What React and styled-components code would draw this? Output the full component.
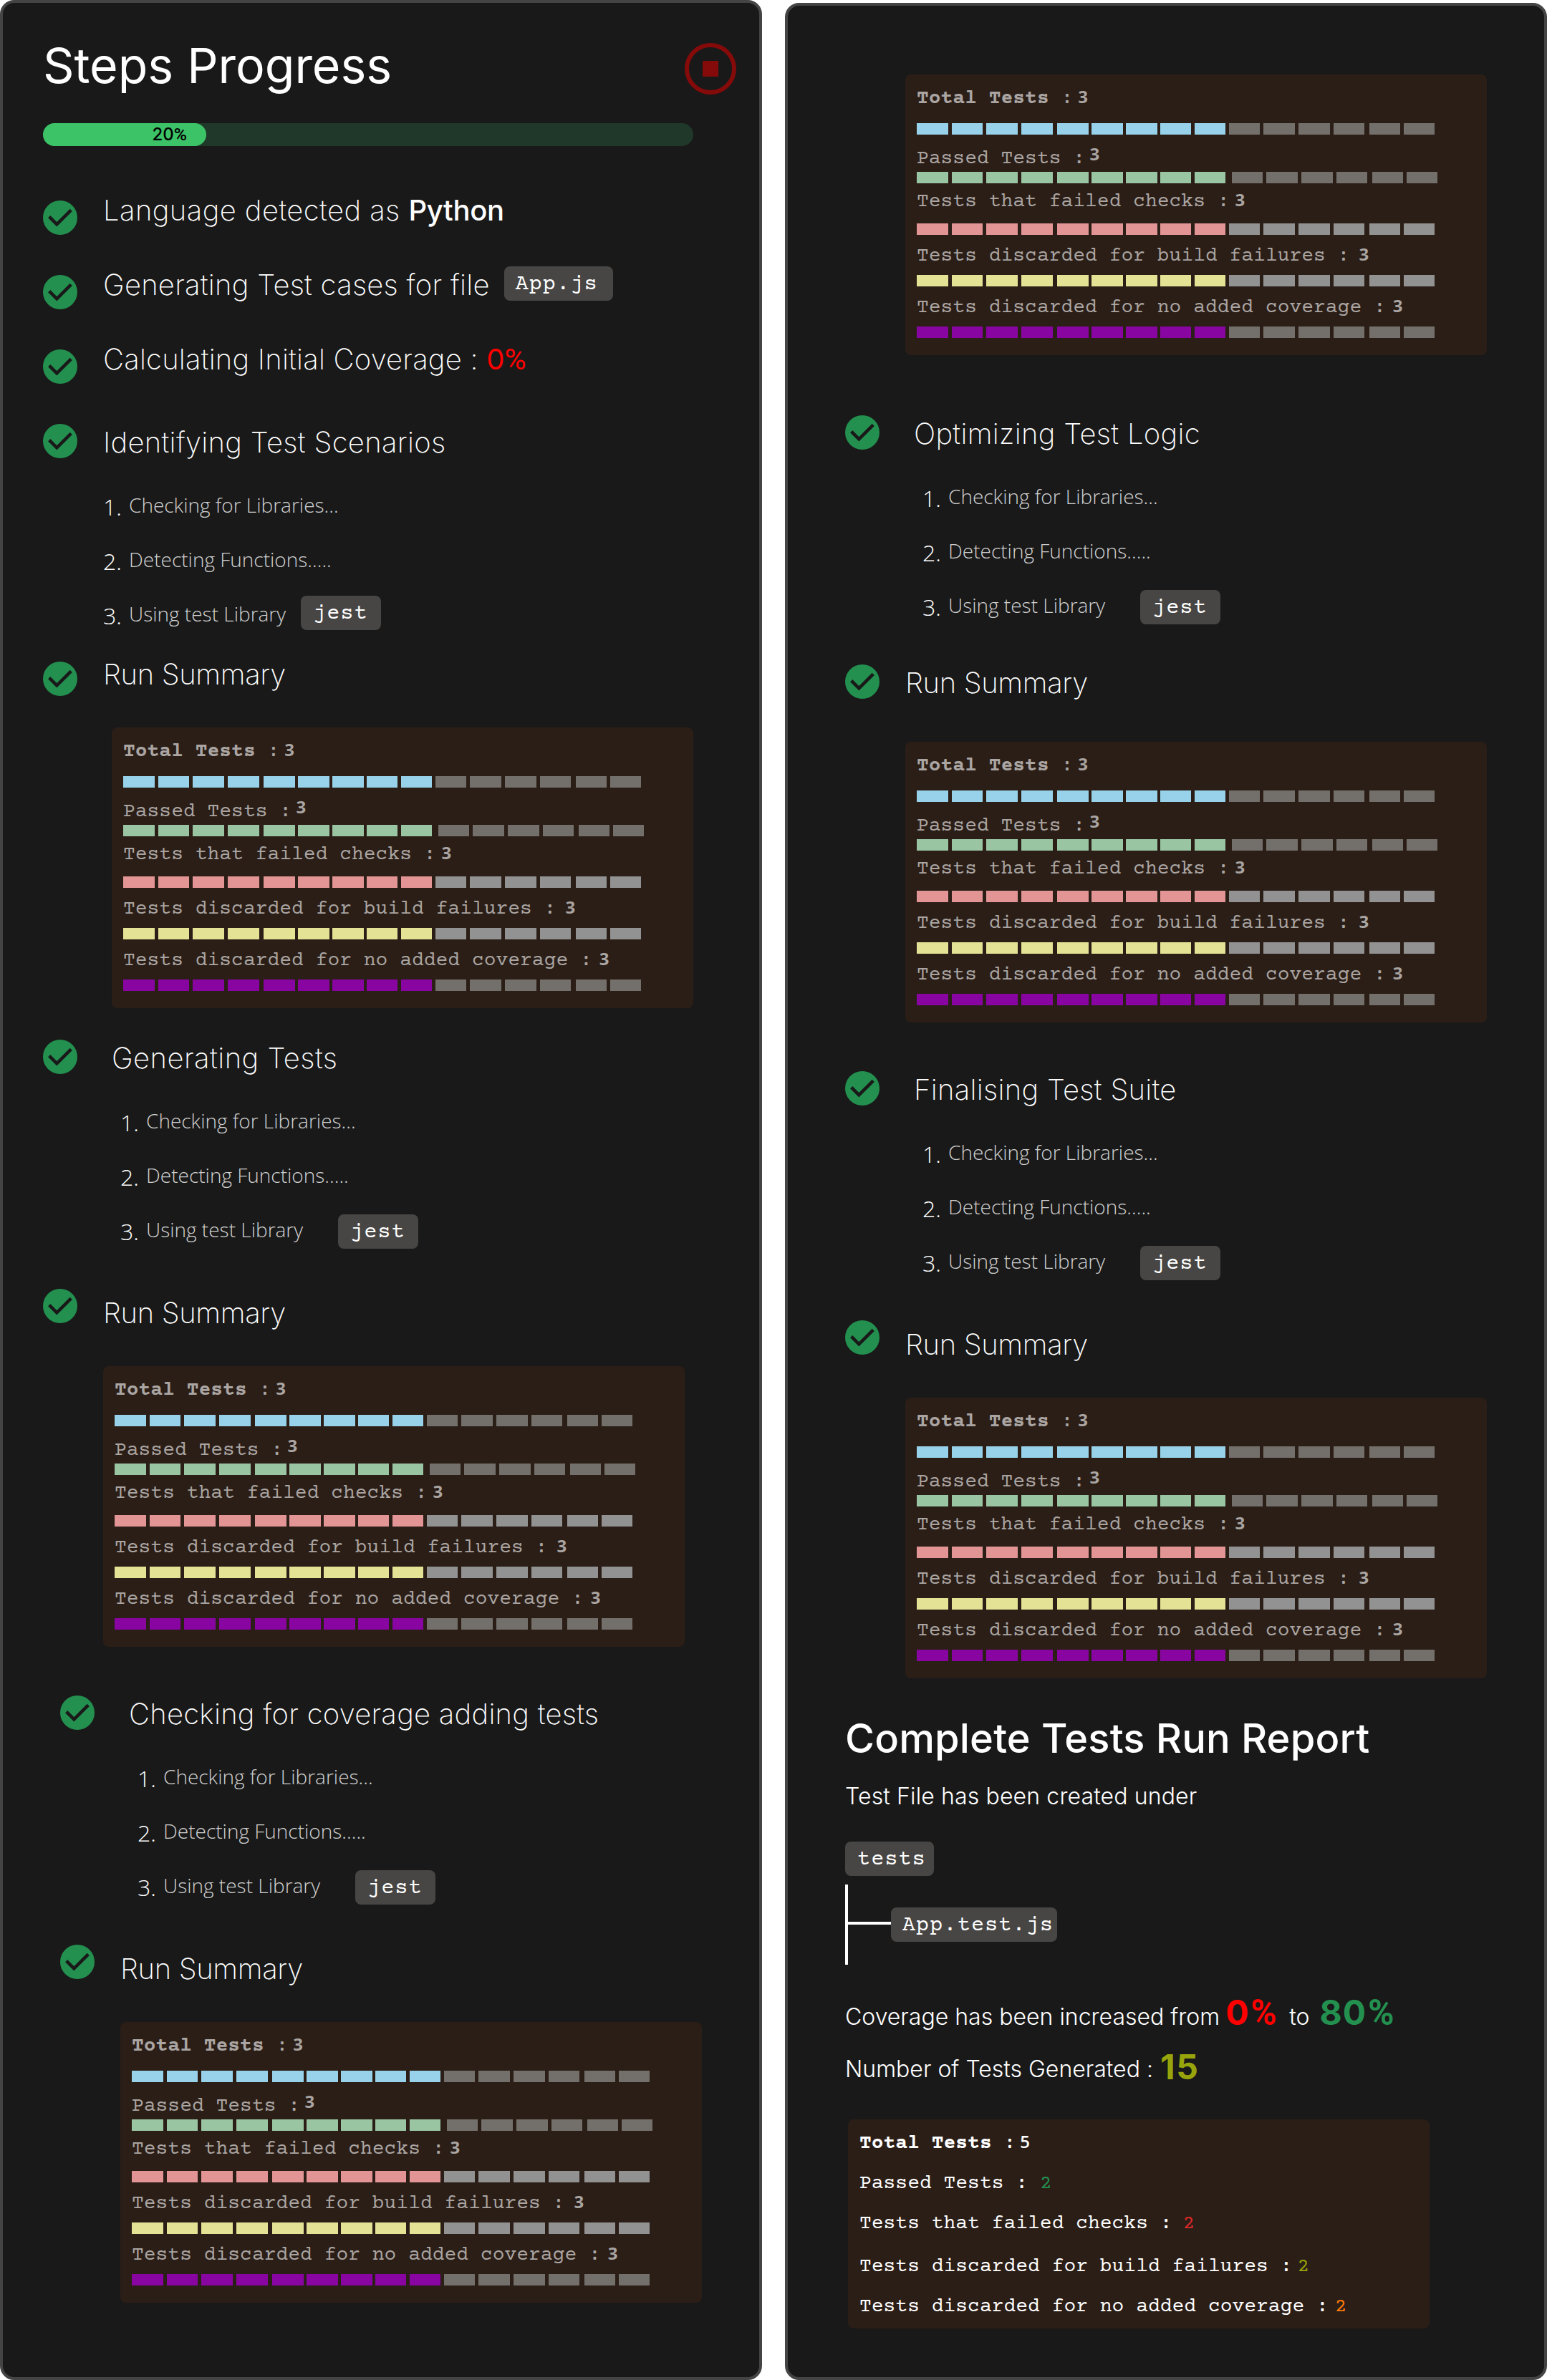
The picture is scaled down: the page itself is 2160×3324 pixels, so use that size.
import React from "react";
import styled, { createGlobalStyle } from "styled-components";

const GlobalStyle = createGlobalStyle`
  *, *::before, *::after { box-sizing: border-box; }
  body { margin: 0; background: #ffffff; }
`;

const inter = `"Inter", "Liberation Sans", sans-serif`;
const openSans = `"Open Sans", "Noto Sans", sans-serif`;
const mono = `"Courier Prime", "Courier New", "Liberation Mono", monospace`;

const Page = styled.main`
  display: flex;
  justify-content: space-between;
  width: 2160px;
  height: 3324px;
  font-family: ${inter};
  color: #ffffff;
`;

const Panel = styled.section`
  display: flex;
  flex-direction: column;
  width: 1064px;
  height: ${(p) => 3324 - p.$top}px;
  margin-top: ${(p) => p.$top}px;
  padding: ${(p) => p.$padTop}px 0 0 ${(p) => p.$padLeft}px;
  border: 4px solid #444444;
  border-radius: 20px;
  background: #191919;
`;

const Header = styled.header`
  display: flex;
  justify-content: space-between;
  align-items: flex-start;
  width: 968px;
  height: 84px;
`;

const Title = styled.h1`
  margin: 1px 0 0;
  font-size: 68px;
  font-weight: 400;
  letter-spacing: -0.05px;
  line-height: 84px;
  white-space: nowrap;
`;

const StopButton = styled.button`
  display: grid;
  place-items: center;
  width: 72px;
  height: 72px;
  margin-top: 12px;
  padding: 0;
  border: 6px solid #850a0a;
  border-radius: 50%;
  background: none;

  &::before {
    content: "";
    width: 22px;
    height: 22px;
    background: #850a0a;
  }
`;

const Track = styled.div`
  width: 908px;
  height: 32px;
  margin-top: 40px;
  border-radius: 16px;
  background: #203829;
`;

const Fill = styled.div`
  display: flex;
  justify-content: flex-end;
  height: 32px;
  padding-right: 27px;
  border-radius: 16px;
  background: #3cc367;
  color: #000000;
  font-size: 24px;
  font-weight: 500;
  line-height: 32px;
`;

const Percent = styled.span`
  margin-left: ${(p) => p.$gap || 0}px;
  font-family: "Roboto", sans-serif;
  font-size: 1.03em;
`;

const StepRow = styled.div`
  display: flex;
  align-items: flex-start;
  height: 48px;
  margin-top: ${(p) => p.$top}px;
`;

const StepLabel = styled.h2`
  display: flex;
  margin: ${(p) => p.$shift}px 0 0 ${(p) => p.$gap}px;
  font-size: 40px;
  font-weight: 200;
  letter-spacing: ${(p) => p.$track}px;
  line-height: 48px;
  white-space: pre;
`;

const Strong = styled.span`
  font-weight: 500;
  letter-spacing: -0.3px;
`;

const Danger = styled.span`
  font-weight: 400;
  letter-spacing: 0;
  color: #ff0000;
`;

const Chip = styled.code`
  flex: none;
  width: ${(p) => p.$width}px;
  height: 48px;
  margin-top: ${(p) => p.$shift || 0}px;
  margin-left: ${(p) => p.$left || 0}px;
  padding-left: ${(p) => p.$pad || 17}px;
  border-radius: 8px;
  background: #484644;
  color: #ffffff;
  font-family: ${mono};
  font-size: 30px;
  font-weight: 400;
  letter-spacing: 1.2px;
  line-height: 51px;
  white-space: nowrap;
`;

const List = styled.ol`
  display: flex;
  flex-direction: column;
  gap: 36px;
  margin: 48px 0 0 ${(p) => p.$left}px;
  padding: 0;
  list-style: none;
`;

const ListItem = styled.li`
  display: flex;
  align-items: flex-start;
  height: 40px;
`;

const ItemNumber = styled.span`
  width: 36px;
  font-family: ${openSans};
  font-size: 32px;
  font-weight: 300;
  line-height: 40px;
`;

const ItemText = styled.span`
  min-width: ${(p) => p.$width}px;
  margin-top: -3px;
  color: #d0d0d0;
  font-family: ${openSans};
  font-size: 28px;
  font-weight: 300;
  line-height: 40px;
  white-space: nowrap;
`;

const Stage = styled.div`
  display: flex;
  flex-direction: column;
  margin-left: ${(p) => p.$left || 0}px;
`;

const SummaryCard = styled.div`
  width: 812px;
  height: 392px;
  margin: ${(p) => p.$top}px 0 0 ${(p) => p.$left}px;
  padding: 1px 0 0 16px;
  border-radius: 8px;
  background: #2b1e17;
`;

const MetricLine = styled.div`
  display: flex;
  align-items: baseline;
  height: 32px;
  margin-top: ${(p) => p.$top}px;
  color: #aaa5a2;
  font-family: ${mono};
  font-size: 28px;
  line-height: 35px;
  white-space: pre;
`;

const MetricName = styled.span`
  font-weight: ${(p) => (p.$bold ? 700 : 400)};
`;

const MetricValue = styled.span`
  margin-left: ${(p) => p.$gap}px;
  transform: translateY(${(p) => -(p.$raise || 0)}px);
  font-family: ${openSans};
  font-size: 24px;
  font-weight: ${(p) => p.$weight || 700};
  line-height: 24px;
`;

const Cells = styled.div`
  display: flex;
  height: 16px;
  margin-top: ${(p) => p.$top}px;
`;

const Cell = styled.span`
  width: 43.64px;
  height: 16px;
  margin-left: ${(p) => p.$gap}px;
  background: ${(p) => p.$color};
`;

const ReportTitle = styled.h1`
  margin: 50px 0 0;
  font-size: 56px;
  font-weight: 500;
  letter-spacing: 0.15px;
  line-height: 68px;
  white-space: nowrap;
`;

const ReportText = styled.p`
  margin: 27px 0 43px;
  font-size: 32px;
  font-weight: 300;
  letter-spacing: 0.13px;
  line-height: 40px;
`;

const Tree = styled.div`
  display: flex;
  align-items: flex-start;
  height: 112px;
  margin-top: 12px;
  border-left: 4px solid #ffffff;
`;

const Branch = styled.div`
  width: 60px;
  height: 4px;
  margin-top: 52px;
  background: #ffffff;
`;

const StatRow = styled.div`
  display: flex;
  align-items: ${(p) => p.$align};
  height: 56px;
  margin-top: ${(p) => p.$top}px;
  line-height: 48px;
  white-space: pre;
`;

const StatText = styled.span`
  margin-top: ${(p) => p.$shift || 0}px;
  margin-left: ${(p) => p.$gap || 0}px;
  font-size: 32px;
  font-weight: 300;
`;

const StatValue = styled.span`
  margin-left: ${(p) => p.$gap}px;
  color: ${(p) => p.$color};
  font-size: 48px;
  font-weight: 700;
  letter-spacing: ${(p) => p.$track || 0}px;
`;

const ReportCard = styled.div`
  display: flex;
  flex-direction: column;
  width: 812px;
  height: 292px;
  margin: 41px 0 0 4px;
  padding: 13px 0 0 16px;
  border-radius: 8px;
  background: #2b1e17;
`;

const ReportLine = styled.div`
  display: flex;
  align-items: baseline;
  height: 40px;
  margin-bottom: ${(p) => p.$after}px;
  font-family: ${mono};
  font-size: 28px;
  line-height: 43px;
  white-space: pre;
`;

const ReportValue = styled.span`
  margin-left: ${(p) => p.$gap}px;
  color: ${(p) => p.$color};
  font-weight: 400;
`;

function CheckIcon() {
  return (
    <svg width="48" height="48" viewBox="0 0 48 48" style={{ flex: "none" }}>
      <circle cx="24" cy="24" r="24" fill="#23904f" />
      <path d="M8.7 22.7 L19.3 33.3 L39.3 13.3" fill="none" stroke="#191919" strokeWidth="4.6" />
    </svg>
  );
}

function Step({ top, gap = 36, shift, track = 0, children }) {
  return (
    <StepRow $top={top}>
      <CheckIcon />
      <StepLabel $gap={gap} $shift={shift} $track={track}>{children}</StepLabel>
    </StepRow>
  );
}

function Checklist({ left, width = 268, chipShift = -4 }) {
  return (
    <List $left={left}>
      <ListItem>
        <ItemNumber>1.</ItemNumber>
        <ItemText>Checking for Libraries...</ItemText>
      </ListItem>
      <ListItem>
        <ItemNumber>2.</ItemNumber>
        <ItemText>Detecting Functions.....</ItemText>
      </ListItem>
      <ListItem>
        <ItemNumber>3.</ItemNumber>
        <ItemText $width={width}>Using test Library</ItemText>
        <Chip $width={112} $shift={chipShift}>jest</Chip>
      </ListItem>
    </List>
  );
}

const DIM = "#736f6b";
const PALE = "#929292";
const CELL_GAPS = [0, 5.03, 5.03, 5.03, 6.36, 4.36, 4.36, 4.36, 4.36, 4.36, 5.03, 5.03, 5.03, 6.36, 4.36];
const FILLED = 9;

const METRICS = [
  { name: "Total Tests", bold: true, gap: 7, top: 16, barTop: 19, color: "#97d2ea", rest: DIM },
  { name: "Passed Tests", gap: 6.5, raise: 4, top: 17, barTop: 3, color: "#9ac5a2", rest: DIM, split: 4 },
  { name: "Tests that failed checks", gap: 8, top: 9, barTop: 15, color: "#e29594", rest: PALE },
  { name: "Tests discarded for build failures", gap: 13, top: 13, barTop: 11, color: "#e4e295", rest: PALE },
  { name: "Tests discarded for no added coverage", gap: 10, top: 13, barTop: 11, color: "#8805a1", rest: DIM },
];

function Summary({ top, left = 84 }) {
  return (
    <SummaryCard $top={top} $left={left}>
      {METRICS.map((m) => (
        <React.Fragment key={m.name}>
          <MetricLine $top={m.top}>
            <MetricName $bold={m.bold}>{m.name}</MetricName>
            <span>{" :"}</span>
            <MetricValue $gap={m.gap} $raise={m.raise}>3</MetricValue>
          </MetricLine>
          <Cells $top={m.barTop}>
            {CELL_GAPS.map((gap, i) => (
              <Cell
                key={i}
                $gap={i === FILLED ? gap + (m.split || 0) : gap}
                $color={i < FILLED ? m.color : m.rest}
              />
            ))}
          </Cells>
        </React.Fragment>
      ))}
    </SummaryCard>
  );
}

function TestStage({ title, top, left, track, summaryShift = 9.5 }) {
  return (
    <Stage $left={left}>
      <Step top={top} gap={48} shift={1.5} track={track}>{title}</Step>
      <Checklist left={108} />
      <Step top={60} shift={summaryShift} track={-0.36}>Run Summary</Step>
      <Summary top={60} />
    </Stage>
  );
}

export default function App() {
  return (
    <Page>
      <GlobalStyle />
      <Panel $top={0} $padTop={44} $padLeft={56}>
        <Header>
          <Title>Steps Progress</Title>
          <StopButton aria-label="Stop" />
        </Header>
        <Track>
          <Fill style={{ width: 228 }}>20<Percent>%</Percent></Fill>
        </Track>
        <Step top={76} shift={-10.5} track={0.42}>
          Language detected as <Strong>Python</Strong>
        </Step>
        <Step top={56} shift={-10.5} track={0.25}>
          Generating Test cases for file
          <Chip $width={152} $left={20} $shift={-1.5} $pad={16}>App.js</Chip>
        </Step>
        <Step top={56} shift={-10.5} track={0.2}>
          Calculating Initial Coverage : <Danger>0<Percent>%</Percent></Danger>
        </Step>
        <Step top={56} shift={1.5} track={0.3}>Identifying Test Scenarios</Step>
        <Checklist left={84} width={240} chipShift={-8} />
        <Step top={44} shift={-6.5} track={-0.36}>Run Summary</Step>
        <Summary top={44} left={96} />
        <TestStage title="Generating Tests" top={44} track={0.45} />
        <TestStage title="Checking for coverage adding tests" top={68} left={24} track={0.25} />
      </Panel>
      <Panel $top={4} $padTop={96} $padLeft={80}>
        <Summary top={0} />
        <TestStage title="Optimizing Test Logic" top={84} track={0.3} summaryShift={1.5} />
        <TestStage title="Finalising Test Suite" top={68} track={0.27} />
        <ReportTitle>Complete Tests Run Report</ReportTitle>
        <ReportText>Test File has been created under</ReportText>
        <Chip $width={124}>tests</Chip>
        <Tree>
          <Branch />
          <Chip $width={232} $shift={32} $pad={16}>App.test.js</Chip>
        </Tree>
        <StatRow $top={43} $align="baseline">
          <StatText>Coverage has been increased from</StatText>
          <StatValue $gap={8} $color="#ff0000">0<Percent $gap={3}>%</Percent></StatValue>
          <StatText $gap={17}>to</StatText>
          <StatValue $gap={14} $track={1} $color="#23904f">80<Percent $gap={2}>%</Percent></StatValue>
        </StatRow>
        <StatRow $top={20} $align="flex-start">
          <StatText $shift={2.5}>Number of Tests Generated :</StatText>
          <StatValue $gap={10} $track={1.5} $color="#98a40c">15</StatValue>
        </StatRow>
        <ReportCard>
          <ReportLine $after={16}>
            <MetricName $bold>Total Tests</MetricName>
            <span>{" :"}</span>
            <MetricValue $gap={6} $weight={600}>5</MetricValue>
          </ReportLine>
          <ReportLine $after={16}>
            Passed Tests :<ReportValue $gap={17} $color="#23904f">2</ReportValue>
          </ReportLine>
          <ReportLine $after={20}>
            Tests that failed checks :<ReportValue $gap={15} $color="#e02828">2</ReportValue>
          </ReportLine>
          <ReportLine $after={16}>
            Tests discarded for build failures :<ReportValue $gap={7} $color="#98a40c">2</ReportValue>
          </ReportLine>
          <ReportLine $after={0}>
            Tests discarded for no added coverage :<ReportValue $gap={9} $color="#ff7a0a">2</ReportValue>
          </ReportLine>
        </ReportCard>
      </Panel>
    </Page>
  );
}
